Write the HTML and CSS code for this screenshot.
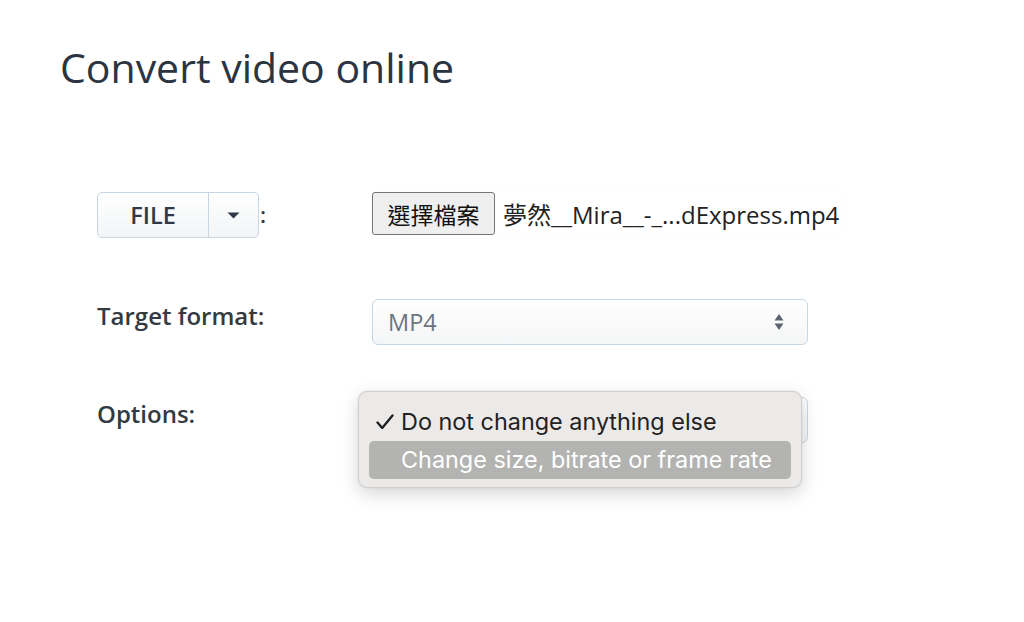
FILE: index.html
```html
<!DOCTYPE html>
<html>
<head>
<meta charset="utf-8">
<link rel="stylesheet" href="styles.css">
</head>
<body>
<div class="page">
  <h1 class="title">Convert video online</h1>
  <div class="form">
    <div class="row row-file">
      <div class="label-cell">
        <div class="btn-group">
          <span class="btn-main">FILE</span>
          <span class="btn-caret"><svg width="13" height="7" viewBox="0 0 13 7"><path d="M0.5 0.5h12L6.5 6.5z" fill="#2f3a48"/></svg></span>
        </div>
        <span class="colon">:</span>
      </div>
      <div class="control-cell">
        <div class="file-input">
          <span class="file-btn">選擇檔案</span>
          <span class="file-name">夢然__Mira__-_...dExpress.mp4</span>
        </div>
      </div>
    </div>
    <div class="row row-format">
      <div class="label-cell"><span class="label">Target format:</span></div>
      <div class="control-cell">
        <div class="select">
          <span class="select-text">MP4</span>
          <svg class="arrows" width="10" height="18" viewBox="0 0 10 18"><path d="M5 1L9.5 7.5H0.5z M5 17L9.5 10.5H0.5z" fill="#5b6470"/></svg>
        </div>
      </div>
    </div>
    <div class="row row-options">
      <div class="label-cell"><span class="label">Options:</span></div>
      <div class="control-cell">
        <div class="select select-hidden"></div>
        <div class="popup">
          <div class="item item-checked"><svg class="check" width="18" height="16" viewBox="0 0 18 16"><path d="M1.5 8.5L6.2 14L16.5 1.5" fill="none" stroke="#1e1e1e" stroke-width="2.3" stroke-linecap="round" stroke-linejoin="round"/></svg>Do not change anything else</div>
          <div class="item item-active">Change size, bitrate or frame rate</div>
        </div>
      </div>
    </div>
  </div>
</div>
</body>
</html>
```
FILE: styles.css
```css
html, body {
  margin: 0;
  padding: 0;
  background: #ffffff;
}
body {
  font-family: "Open Sans", "Noto Sans CJK TC", sans-serif;
  color: #2b3440;
}
.page {
  box-sizing: border-box;
  min-height: 622px;
  padding: 38px 0 0 60px;
}
.title {
  margin: 0;
  font-size: 41px;
  font-weight: 400;
  line-height: 58px;
  color: #2b3440;
}
.form {
  margin-top: 96px;
  padding-left: 37px;
}
.row {
  display: grid;
  grid-template-columns: 275px 440px;
}
.row-file { height: 107px; }
.row-format { height: 98px; }
.row-options { height: 200px; }
.label-cell {
  display: flex;
  align-items: flex-start;
}
.control-cell {
  position: relative;
}
.btn-group {
  display: flex;
  height: 46px;
  box-sizing: border-box;
  border: 1px solid #c8d6e4;
  border-radius: 5px;
  background: linear-gradient(#ffffff, #f2f4f6);
}
.btn-main {
  width: 110px;
  display: flex;
  align-items: center;
  justify-content: center;
  font-weight: 600;
  font-size: 23.5px;
  color: #2f3a48;
  border-right: 1px solid #c8d6e4;
}
.btn-caret {
  width: 49px;
  display: flex;
  align-items: center;
  justify-content: center;
}
.colon {
  font-weight: 600;
  font-size: 22px;
  line-height: 44px;
  margin-left: 1px;
  color: #2f3a48;
}
.file-input {
  display: flex;
  align-items: center;
  width: 468px;
  height: 43px;
  background: #ffffff;
  box-shadow: 0 0 1px rgba(0,0,0,0.06);
}
.file-btn {
  box-sizing: border-box;
  height: 43px;
  width: 123px;
  flex: none;
  display: flex;
  align-items: center;
  justify-content: center;
  background: #efefef;
  border: 1px solid #767676;
  border-radius: 3px;
  font-family: "Noto Sans CJK TC", sans-serif;
  font-size: 23px;
  color: #111;
}
.file-name {
  margin-left: 8px;
  font-size: 24px;
  color: #222;
  white-space: nowrap;
}
.label {
  font-weight: 600;
  font-size: 24px;
  line-height: 34px;
  color: #333a42;
}
.select {
  box-sizing: border-box;
  width: 436px;
  height: 46px;
  border: 1px solid #c9d7e4;
  border-radius: 6px;
  background: linear-gradient(#ffffff, #f4f5f6);
  display: flex;
  align-items: center;
  justify-content: space-between;
  padding: 0 23px 0 15px;
}
.select-text {
  font-size: 23.5px;
  color: #6b7580;
}
.arrows { display: block; }
.popup {
  position: absolute;
  left: -14px;
  top: -6px;
  width: 444px;
  box-sizing: border-box;
  padding: 10px 10px 8px 10px;
  background: #ebeae9;
  border: 1px solid #cfcfcf;
  border-radius: 9px;
  box-shadow: 0 6px 18px rgba(0,0,0,0.16), 0 0 2px rgba(0,0,0,0.1);
  font-family: "Inter", "Open Sans", sans-serif;
}
.item {
  height: 38px;
  line-height: 38px;
  padding-left: 32px;
  font-size: 23.4px;
  color: #222222;
  position: relative;
  border-radius: 5px;
  white-space: nowrap;
}
.item-checked { height: 39px; line-height: 40px; }
.check {
  position: absolute;
  left: 7px;
  top: 12px;
}
.item-active {
  background: #b3b3b2;
  color: #ffffff;
}
```
